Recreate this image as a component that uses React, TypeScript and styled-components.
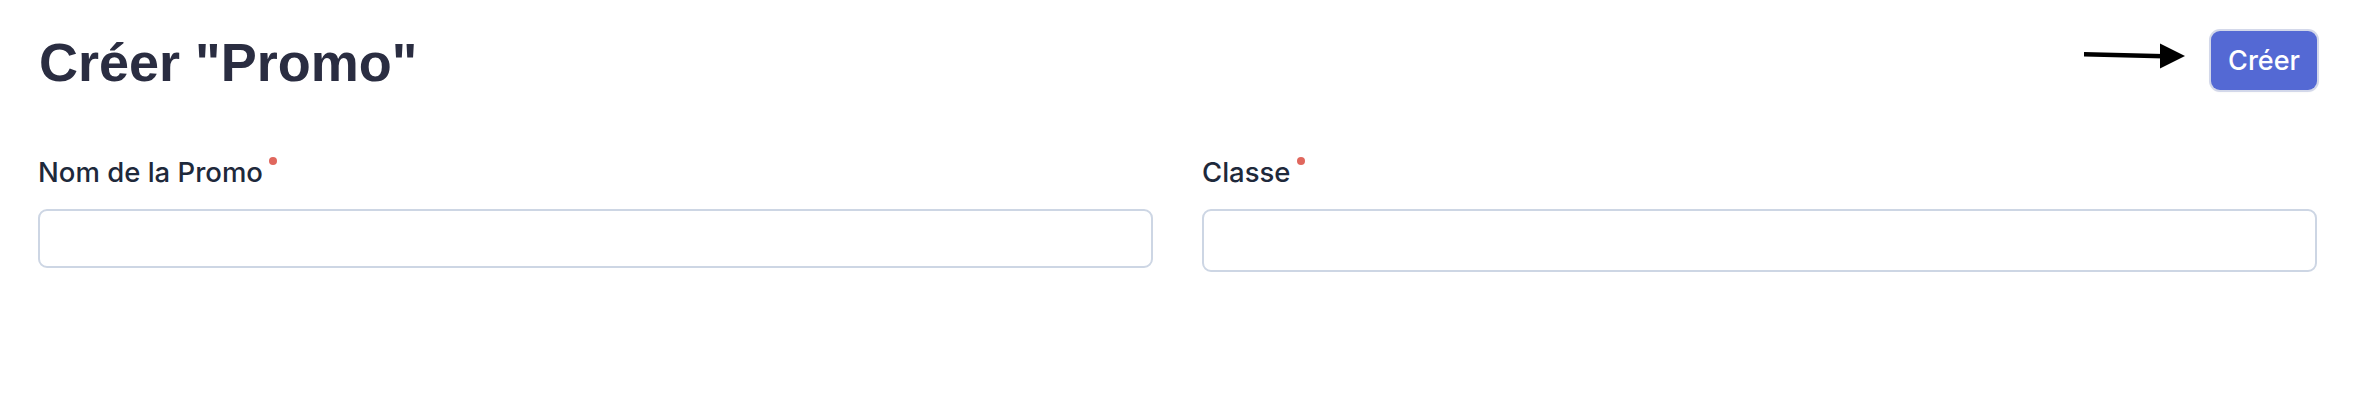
import React from "react";
import styled, { createGlobalStyle } from "styled-components";

const GlobalStyle = createGlobalStyle`
  html, body {
    margin: 0;
    padding: 0;
    background: #ffffff;
  }
  body {
    font-family: Inter, "Noto Sans", sans-serif;
  }
  * { box-sizing: border-box; }
`;

const Page = styled.div`
  padding: 31px 41px 0 38px;
`;

const Header = styled.header`
  display: flex;
  justify-content: space-between;
  align-items: flex-start;
`;

const Title = styled.h1`
  margin: 4px 0 0 1px;
  font-family: "Liberation Sans", Arial, sans-serif;
  font-weight: 700;
  font-size: 54px;
  line-height: 54px;
  letter-spacing: 0;
  color: #2a2d41;
`;

const Actions = styled.div`
  display: flex;
  align-items: flex-start;
  gap: 25px;
`;

const ArrowMark = styled.svg`
  display: block;
  margin-top: 11px;
`;

const PrimaryButton = styled.button`
  height: 59px;
  padding: 0 17px;
  border: none;
  border-radius: 9px;
  background: #5469d4;
  color: #ffffff;
  font-family: Inter, "Noto Sans", sans-serif;
  font-size: 27px;
  font-weight: 500;
  cursor: pointer;
  box-shadow: 0 0 0 2px #d3d8ea, 0 1px 3px rgba(15, 23, 42, 0.12);
`;

const Form = styled.form`
  display: grid;
  grid-template-columns: 1fr 1fr;
  column-gap: 49px;
  margin-top: 61.5px;
`;

const Field = styled.div`
  display: flex;
  flex-direction: column;
  gap: 17.5px;
`;

const Label = styled.label`
  display: flex;
  align-items: flex-start;
  font-family: Inter, "Noto Sans", sans-serif;
  font-size: 27.5px;
  font-weight: 500;
  line-height: 40px;
  color: #1e293b;
`;

const RequiredDot = styled.span`
  width: 8px;
  height: 8px;
  margin: 5px 0 0 6px;
  border-radius: 50%;
  background: #e0675d;
`;

const TextInput = styled.input<{ $tall?: boolean }>`
  width: 100%;
  height: ${(p) => (p.$tall ? "63px" : "59px")};
  border: 2px solid #cdd6e4;
  border-radius: 9px;
  background: #ffffff;
  padding: 0 16px;
  font-family: Inter, "Noto Sans", sans-serif;
  font-size: 24px;
  outline: none;
`;

const Arrow = () => (
  <ArrowMark width="102" height="28" viewBox="0 0 102 28">
    <line x1="0" y1="12.3" x2="80" y2="14.2" stroke="#000" strokeWidth="4.5" />
    <polygon points="76,1.5 101,14 76,26.5" fill="#000" />
  </ArrowMark>
);

export default function App() {
  return (
    <>
      <GlobalStyle />
      <Page>
        <Header>
          <Title>Créer "Promo"</Title>
          <Actions>
            <Arrow />
            <PrimaryButton type="button">Créer</PrimaryButton>
          </Actions>
        </Header>
        <Form>
          <Field>
            <Label>
              <span>Nom de la Promo</span>
              <RequiredDot />
            </Label>
            <TextInput type="text" />
          </Field>
          <Field>
            <Label>
              <span>Classe</span>
              <RequiredDot />
            </Label>
            <TextInput type="text" $tall />
          </Field>
        </Form>
      </Page>
    </>
  );
}
